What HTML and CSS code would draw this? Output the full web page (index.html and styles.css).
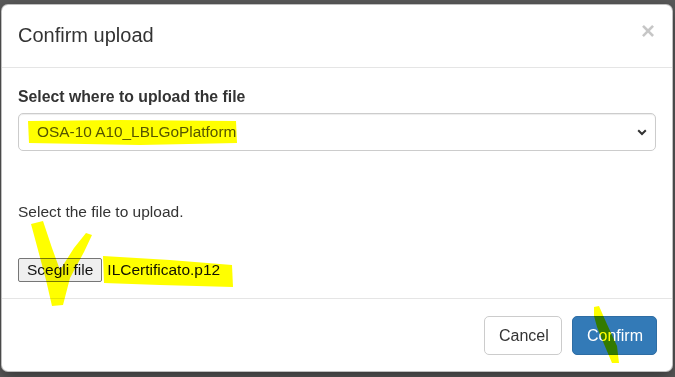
FILE: index.html
```html
<!DOCTYPE html>
<html lang="en">
<head>
<meta charset="utf-8">
<title>Confirm upload</title>
<link rel="stylesheet" href="styles.css">
</head>
<body>
<div class="page">
  <div class="modal">
    <div class="modal-header">
      <h4 class="modal-title">Confirm upload</h4>
      <span class="close">&times;</span>
    </div>
    <div class="modal-body">
      <div class="form-group">
        <label class="label">Select where to upload the file</label>
        <div class="select">
          <span class="select-value">OSA-10 A10_LBLGoPlatform</span>
          <svg class="chevron" width="10" height="7" viewBox="0 0 10 7"><path d="M1.2 1.2 L5 5 L8.8 1.2" fill="none" stroke="#333" stroke-width="2"/></svg>
        </div>
      </div>
      <p class="hint">Select the file to upload.</p>
      <div class="file-row">
        <button class="file-btn" type="button">Scegli file</button>
        <span class="file-name">ILCertificato.p12</span>
      </div>
    </div>
    <div class="modal-footer">
      <button class="btn btn-default" type="button">Cancel</button>
      <button class="btn btn-primary" type="button">Confirm</button>
    </div>
  </div>
  <div class="behind">
    <span class="cell cell-a">Linux</span>
    <span class="cell cell-b">con/erkeys</span>
  </div>
</div>
<svg class="marks" width="675" height="377" viewBox="0 0 675 377">
  <path d="M28 121 L120 120 L236 121 L237 143 L140 145 L29 143 Z" fill="#ffff00"/>
  <path d="M103 256 L170 260 L232 265 L233 287 L160 285 L104 283 Z" fill="#ffff00"/>
  <path d="M31 224 L43 221 L52 248 L60 270 L74 248 L86 233 L92 235 L84 252 L70 278 L63 305 L52 306 L46 280 L38 250 Z" fill="#ffff00"/>
  <path d="M594 307 L599 306 L606 322 L617 346 L619 363 L612 363 L604 344 L597 327 L594 316 Z" fill="#ffff00"/>
</svg>
</body>
</html>
```
FILE: styles.css
```css
* { box-sizing: border-box; }
html, body { margin: 0; padding: 0; }
body {
  background: #5a5a5a;
  font-family: "Liberation Sans", Arial, sans-serif;
  color: #333;
  width: 675px;
  height: 377px;
  overflow: hidden;
  position: relative;
}
.page {
  padding: 4px 2px 0 1px;
}
.modal {
  width: 672px;
  height: 368px;
  background: #fff;
  border: 1px solid rgba(0,0,0,.25);
  border-radius: 7px;
  box-shadow: 0 5px 15px rgba(0,0,0,.4);
  display: flex;
  flex-direction: column;
}
.modal-header {
  display: flex;
  justify-content: space-between;
  align-items: flex-start;
  padding: 16px 16px 17px 16px;
  border-bottom: 1px solid #e5e5e5;
}
.modal-title {
  margin: 0;
  font-size: 20px;
  font-weight: normal;
  line-height: 29px;
  color: #333;
}
.close {
  font-size: 24px;
  font-weight: bold;
  line-height: 22px;
  color: #000;
  opacity: .22;
  margin-top: -1px;
  margin-right: 1px;
}
.modal-body {
  flex: 1;
  padding: 17px 16px 0 16px;
}
.form-group { margin-bottom: 17px; }
.label {
  display: block;
  font-size: 15.8px;
  font-weight: bold;
  line-height: 23px;
  margin-bottom: 5px;
}
.select {
  height: 38px;
  border: 1px solid #ccc;
  border-radius: 5px;
  display: flex;
  align-items: center;
  justify-content: space-between;
  padding: 0 8px 0 18px;
  font-size: 15.4px;
  color: #555;
  box-shadow: inset 0 1px 1px rgba(0,0,0,.075);
}
.hint {
  margin: 49px 0 0 0;
  font-size: 15.5px;
  line-height: 23px;
}
.file-row {
  margin-top: 35px;
  display: flex;
  align-items: center;
  gap: 5px;
  font-size: 15.5px;
}
.file-btn {
  font-family: inherit;
  font-size: 15.5px;
  color: #111;
  height: 24px;
  padding: 0 8px;
  background: #efefef;
  border: 1px solid #767676;
  border-radius: 2px;
}
.file-name { color: #111; }
.modal-footer {
  display: flex;
  justify-content: flex-end;
  gap: 10px;
  padding: 17px 15px 16px 16px;
  border-top: 1px solid #e5e5e5;
}
.btn {
  font-family: inherit;
  font-size: 16px;
  line-height: 23px;
  height: 39px;
  padding: 7px 14px;
  border-radius: 5px;
  border: 1px solid transparent;
}
.btn-default {
  background: #fff;
  color: #333;
  border-color: #ccc;
  width: 78px;
}
.btn-primary {
  background: #337ab7;
  color: #fff;
  border-color: #2e6da4;
  width: 85px;
}
.behind {
  display: flex;
  height: 20px;
  margin-top: 2px;
  font-size: 16px;
  line-height: 20px;
  color: #1e1e1e;
}
.cell { display: block; }
.cell-a { width: 279px; padding-left: 21px; border-right: 1px solid #444; }
.cell-b { padding-left: 7px; }
.marks {
  position: absolute;
  left: 0;
  top: 0;
  mix-blend-mode: multiply;
  pointer-events: none;
}
```
